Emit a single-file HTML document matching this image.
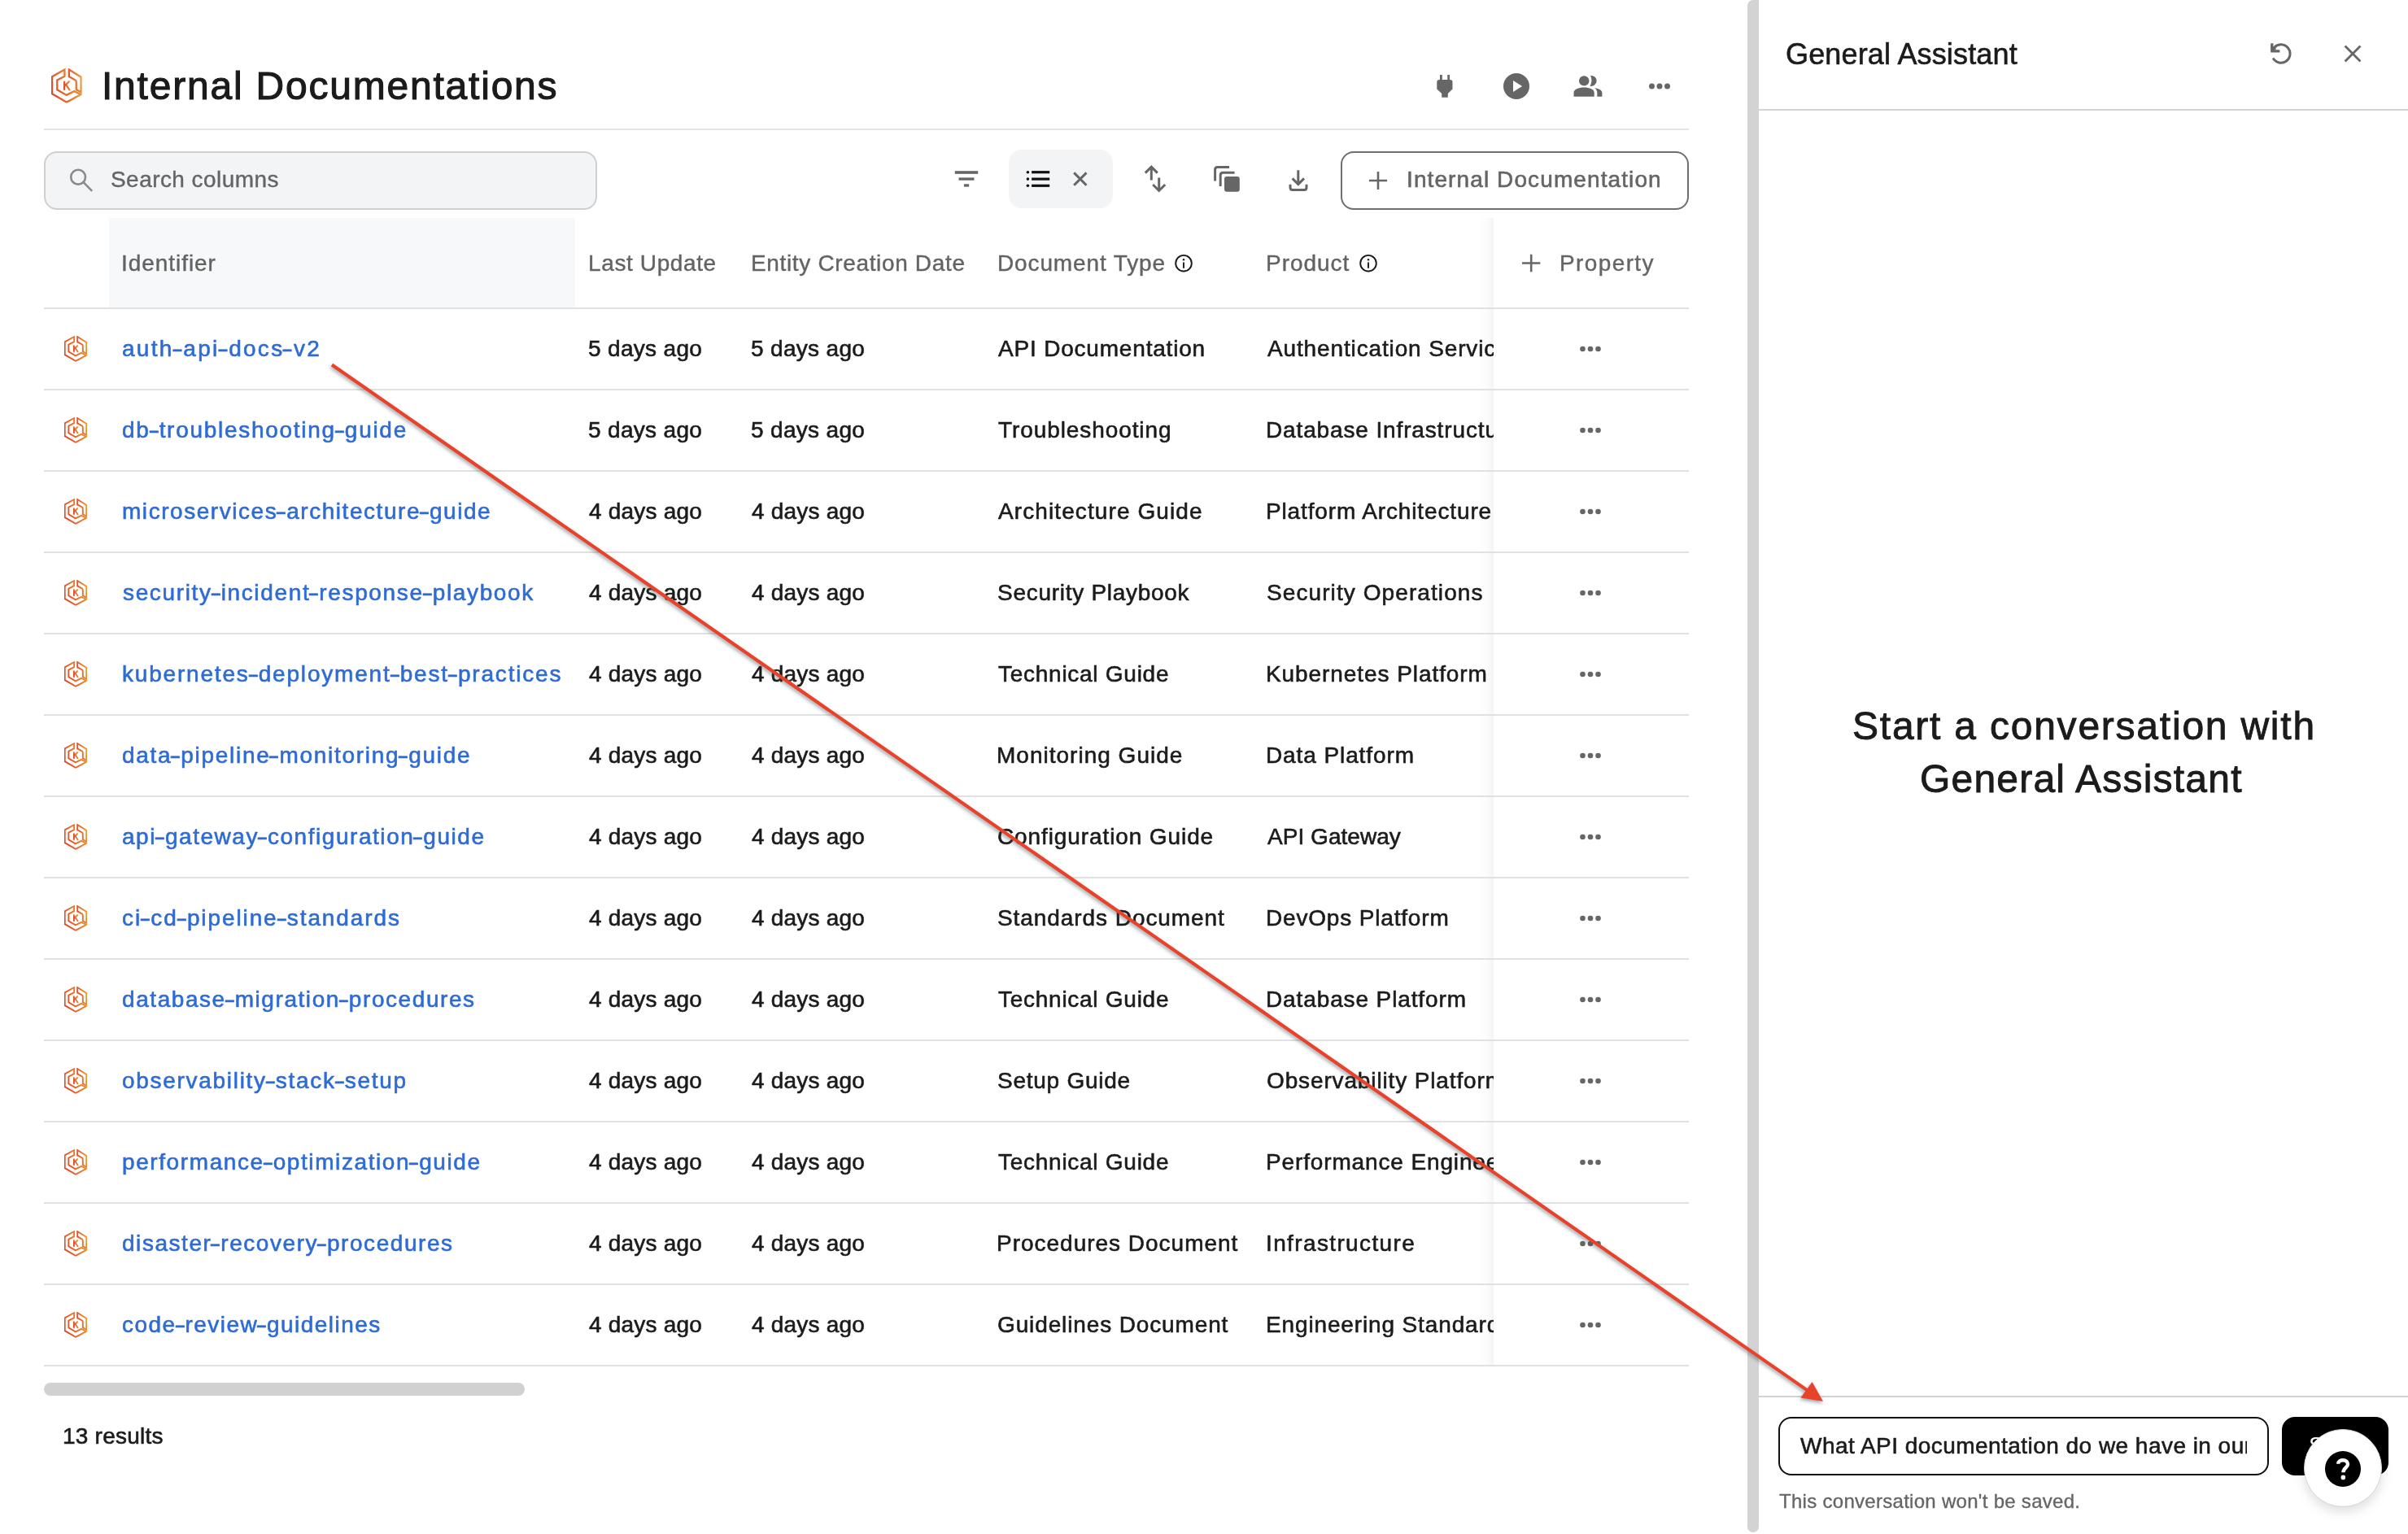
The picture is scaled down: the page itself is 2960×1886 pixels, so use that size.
<!DOCTYPE html>
<html><head><meta charset="utf-8"><title>Internal Documentations</title>
<style>
html,body{margin:0;padding:0;background:#fff;}
body{width:2960px;height:1886px;overflow:hidden;position:relative;font-family:"Liberation Sans",sans-serif;}
.a{position:absolute;box-sizing:border-box;}
.t{position:absolute;white-space:nowrap;font-family:"Liberation Sans",sans-serif;will-change:transform;}
.hy{display:inline-block;transform:scaleX(1.5);}
svg.full{position:absolute;left:0;top:0;width:2960px;height:1886px;overflow:visible;}
</style></head><body>
<!-- backgrounds -->
<div class="a" style="left:54px;top:158px;width:2022px;height:2px;background:#e3e3e3"></div>
<div class="a" style="left:54px;top:186px;width:680px;height:72px;border:2px solid #cfcfcf;border-radius:16px;background:#f3f4f6"></div>
<div class="a" style="left:1240px;top:184px;width:128px;height:72px;border-radius:16px;background:#f3f4f6"></div>
<div class="a" style="left:1648px;top:186px;width:428px;height:72px;border:2px solid #6e6e6e;border-radius:16px;background:#fff"></div>
<div class="a" style="left:134px;top:268px;width:573px;height:110px;background:#f7f8f9"></div>

<div class="t" style="left:124.7px;top:81.5px;font-size:48px;line-height:48px;color:#1b1b1b;letter-spacing:1.787px;-webkit-text-stroke:1.1px #1b1b1b">Internal Documentations</div>
<div class="t" style="left:135.9px;top:207.2px;font-size:28px;line-height:28px;color:#656565;letter-spacing:0.442px;-webkit-text-stroke:0.4px #656565">Search columns</div>
<div class="t" style="left:1729.1px;top:207.0px;font-size:28px;line-height:28px;color:#656565;letter-spacing:1.103px;-webkit-text-stroke:0.6px #656565">Internal Documentation</div>
<div class="t" style="left:149.2px;top:309.5px;font-size:28px;line-height:28px;color:#636363;letter-spacing:0.948px;-webkit-text-stroke:0.4px #636363">Identifier</div>
<div class="t" style="left:722.7px;top:309.7px;font-size:28px;line-height:28px;color:#636363;letter-spacing:0.618px;-webkit-text-stroke:0.4px #636363">Last Update</div>
<div class="t" style="left:922.7px;top:309.7px;font-size:28px;line-height:28px;color:#636363;letter-spacing:0.653px;-webkit-text-stroke:0.4px #636363">Entity Creation Date</div>
<div class="t" style="left:1225.6px;top:309.7px;font-size:28px;line-height:28px;color:#636363;letter-spacing:0.873px;-webkit-text-stroke:0.4px #636363">Document Type</div>
<div class="t" style="left:1555.8px;top:309.7px;font-size:28px;line-height:28px;color:#636363;letter-spacing:0.964px;-webkit-text-stroke:0.4px #636363">Product</div>
<div class="t" style="left:150.0px;top:414.9px;font-size:28px;line-height:28px;color:#2d6bd5;letter-spacing:2.288px;-webkit-text-stroke:0.6px #2d6bd5">auth<span class="hy">-</span>api<span class="hy">-</span>docs<span class="hy">-</span>v2</div>
<div class="t" style="left:723.3px;top:414.9px;font-size:28px;line-height:28px;color:#1b1b1b;letter-spacing:0.320px;-webkit-text-stroke:0.6px #1b1b1b">5 days ago</div>
<div class="t" style="left:923.3px;top:414.9px;font-size:28px;line-height:28px;color:#1b1b1b;letter-spacing:0.320px;-webkit-text-stroke:0.6px #1b1b1b">5 days ago</div>
<div class="t" style="left:1227.3px;top:414.9px;font-size:28px;line-height:28px;color:#1b1b1b;letter-spacing:0.808px;-webkit-text-stroke:0.6px #1b1b1b">API Documentation</div>
<div class="t" style="left:1557.6px;top:414.9px;font-size:28px;line-height:28px;color:#1b1b1b;letter-spacing:0.863px;-webkit-text-stroke:0.6px #1b1b1b">Authentication Service</div>
<div class="t" style="left:150.0px;top:514.9px;font-size:28px;line-height:28px;color:#2d6bd5;letter-spacing:1.713px;-webkit-text-stroke:0.6px #2d6bd5">db<span class="hy">-</span>troubleshooting<span class="hy">-</span>guide</div>
<div class="t" style="left:723.3px;top:514.9px;font-size:28px;line-height:28px;color:#1b1b1b;letter-spacing:0.320px;-webkit-text-stroke:0.6px #1b1b1b">5 days ago</div>
<div class="t" style="left:923.3px;top:514.9px;font-size:28px;line-height:28px;color:#1b1b1b;letter-spacing:0.320px;-webkit-text-stroke:0.6px #1b1b1b">5 days ago</div>
<div class="t" style="left:1227.3px;top:514.9px;font-size:28px;line-height:28px;color:#1b1b1b;letter-spacing:0.915px;-webkit-text-stroke:0.6px #1b1b1b">Troubleshooting</div>
<div class="t" style="left:1555.6px;top:514.9px;font-size:28px;line-height:28px;color:#1b1b1b;letter-spacing:0.863px;-webkit-text-stroke:0.6px #1b1b1b">Database Infrastructure</div>
<div class="t" style="left:150.0px;top:614.9px;font-size:28px;line-height:28px;color:#2d6bd5;letter-spacing:1.548px;-webkit-text-stroke:0.6px #2d6bd5">microservices<span class="hy">-</span>architecture<span class="hy">-</span>guide</div>
<div class="t" style="left:724.3px;top:614.9px;font-size:28px;line-height:28px;color:#1b1b1b;letter-spacing:0.209px;-webkit-text-stroke:0.6px #1b1b1b">4 days ago</div>
<div class="t" style="left:924.3px;top:614.9px;font-size:28px;line-height:28px;color:#1b1b1b;letter-spacing:0.209px;-webkit-text-stroke:0.6px #1b1b1b">4 days ago</div>
<div class="t" style="left:1227.3px;top:614.9px;font-size:28px;line-height:28px;color:#1b1b1b;letter-spacing:1.099px;-webkit-text-stroke:0.6px #1b1b1b">Architecture Guide</div>
<div class="t" style="left:1555.6px;top:614.9px;font-size:28px;line-height:28px;color:#1b1b1b;letter-spacing:0.863px;-webkit-text-stroke:0.6px #1b1b1b">Platform Architecture</div>
<div class="t" style="left:151.0px;top:714.9px;font-size:28px;line-height:28px;color:#2d6bd5;letter-spacing:1.647px;-webkit-text-stroke:0.6px #2d6bd5">security<span class="hy">-</span>incident<span class="hy">-</span>response<span class="hy">-</span>playbook</div>
<div class="t" style="left:724.3px;top:714.9px;font-size:28px;line-height:28px;color:#1b1b1b;letter-spacing:0.209px;-webkit-text-stroke:0.6px #1b1b1b">4 days ago</div>
<div class="t" style="left:924.3px;top:714.9px;font-size:28px;line-height:28px;color:#1b1b1b;letter-spacing:0.209px;-webkit-text-stroke:0.6px #1b1b1b">4 days ago</div>
<div class="t" style="left:1226.3px;top:714.9px;font-size:28px;line-height:28px;color:#1b1b1b;letter-spacing:0.718px;-webkit-text-stroke:0.6px #1b1b1b">Security Playbook</div>
<div class="t" style="left:1556.6px;top:714.9px;font-size:28px;line-height:28px;color:#1b1b1b;letter-spacing:1.090px;-webkit-text-stroke:0.6px #1b1b1b">Security Operations</div>
<div class="t" style="left:150.0px;top:814.9px;font-size:28px;line-height:28px;color:#2d6bd5;letter-spacing:1.805px;-webkit-text-stroke:0.6px #2d6bd5">kubernetes<span class="hy">-</span>deployment<span class="hy">-</span>best<span class="hy">-</span>practices</div>
<div class="t" style="left:724.3px;top:814.9px;font-size:28px;line-height:28px;color:#1b1b1b;letter-spacing:0.209px;-webkit-text-stroke:0.6px #1b1b1b">4 days ago</div>
<div class="t" style="left:924.3px;top:814.9px;font-size:28px;line-height:28px;color:#1b1b1b;letter-spacing:0.209px;-webkit-text-stroke:0.6px #1b1b1b">4 days ago</div>
<div class="t" style="left:1227.3px;top:814.9px;font-size:28px;line-height:28px;color:#1b1b1b;letter-spacing:0.732px;-webkit-text-stroke:0.6px #1b1b1b">Technical Guide</div>
<div class="t" style="left:1555.6px;top:814.9px;font-size:28px;line-height:28px;color:#1b1b1b;letter-spacing:0.927px;-webkit-text-stroke:0.6px #1b1b1b">Kubernetes Platform</div>
<div class="t" style="left:150.0px;top:914.9px;font-size:28px;line-height:28px;color:#2d6bd5;letter-spacing:1.701px;-webkit-text-stroke:0.6px #2d6bd5">data<span class="hy">-</span>pipeline<span class="hy">-</span>monitoring<span class="hy">-</span>guide</div>
<div class="t" style="left:724.3px;top:914.9px;font-size:28px;line-height:28px;color:#1b1b1b;letter-spacing:0.209px;-webkit-text-stroke:0.6px #1b1b1b">4 days ago</div>
<div class="t" style="left:924.3px;top:914.9px;font-size:28px;line-height:28px;color:#1b1b1b;letter-spacing:0.209px;-webkit-text-stroke:0.6px #1b1b1b">4 days ago</div>
<div class="t" style="left:1225.3px;top:914.9px;font-size:28px;line-height:28px;color:#1b1b1b;letter-spacing:1.010px;-webkit-text-stroke:0.6px #1b1b1b">Monitoring Guide</div>
<div class="t" style="left:1555.6px;top:914.9px;font-size:28px;line-height:28px;color:#1b1b1b;letter-spacing:0.904px;-webkit-text-stroke:0.6px #1b1b1b">Data Platform</div>
<div class="t" style="left:150.0px;top:1014.9px;font-size:28px;line-height:28px;color:#2d6bd5;letter-spacing:1.550px;-webkit-text-stroke:0.6px #2d6bd5">api<span class="hy">-</span>gateway<span class="hy">-</span>configuration<span class="hy">-</span>guide</div>
<div class="t" style="left:724.3px;top:1014.9px;font-size:28px;line-height:28px;color:#1b1b1b;letter-spacing:0.209px;-webkit-text-stroke:0.6px #1b1b1b">4 days ago</div>
<div class="t" style="left:924.3px;top:1014.9px;font-size:28px;line-height:28px;color:#1b1b1b;letter-spacing:0.209px;-webkit-text-stroke:0.6px #1b1b1b">4 days ago</div>
<div class="t" style="left:1226.3px;top:1014.9px;font-size:28px;line-height:28px;color:#1b1b1b;letter-spacing:0.896px;-webkit-text-stroke:0.6px #1b1b1b">Configuration Guide</div>
<div class="t" style="left:1557.6px;top:1014.9px;font-size:28px;line-height:28px;color:#1b1b1b;letter-spacing:0.039px;-webkit-text-stroke:0.6px #1b1b1b">API Gateway</div>
<div class="t" style="left:150.0px;top:1114.9px;font-size:28px;line-height:28px;color:#2d6bd5;letter-spacing:1.898px;-webkit-text-stroke:0.6px #2d6bd5">ci<span class="hy">-</span>cd<span class="hy">-</span>pipeline<span class="hy">-</span>standards</div>
<div class="t" style="left:724.3px;top:1114.9px;font-size:28px;line-height:28px;color:#1b1b1b;letter-spacing:0.209px;-webkit-text-stroke:0.6px #1b1b1b">4 days ago</div>
<div class="t" style="left:924.3px;top:1114.9px;font-size:28px;line-height:28px;color:#1b1b1b;letter-spacing:0.209px;-webkit-text-stroke:0.6px #1b1b1b">4 days ago</div>
<div class="t" style="left:1226.3px;top:1114.9px;font-size:28px;line-height:28px;color:#1b1b1b;letter-spacing:0.932px;-webkit-text-stroke:0.6px #1b1b1b">Standards Document</div>
<div class="t" style="left:1555.6px;top:1114.9px;font-size:28px;line-height:28px;color:#1b1b1b;letter-spacing:0.825px;-webkit-text-stroke:0.6px #1b1b1b">DevOps Platform</div>
<div class="t" style="left:150.0px;top:1214.9px;font-size:28px;line-height:28px;color:#2d6bd5;letter-spacing:1.568px;-webkit-text-stroke:0.6px #2d6bd5">database<span class="hy">-</span>migration<span class="hy">-</span>procedures</div>
<div class="t" style="left:724.3px;top:1214.9px;font-size:28px;line-height:28px;color:#1b1b1b;letter-spacing:0.209px;-webkit-text-stroke:0.6px #1b1b1b">4 days ago</div>
<div class="t" style="left:924.3px;top:1214.9px;font-size:28px;line-height:28px;color:#1b1b1b;letter-spacing:0.209px;-webkit-text-stroke:0.6px #1b1b1b">4 days ago</div>
<div class="t" style="left:1227.3px;top:1214.9px;font-size:28px;line-height:28px;color:#1b1b1b;letter-spacing:0.732px;-webkit-text-stroke:0.6px #1b1b1b">Technical Guide</div>
<div class="t" style="left:1555.6px;top:1214.9px;font-size:28px;line-height:28px;color:#1b1b1b;letter-spacing:0.883px;-webkit-text-stroke:0.6px #1b1b1b">Database Platform</div>
<div class="t" style="left:150.0px;top:1314.9px;font-size:28px;line-height:28px;color:#2d6bd5;letter-spacing:1.702px;-webkit-text-stroke:0.6px #2d6bd5">observability<span class="hy">-</span>stack<span class="hy">-</span>setup</div>
<div class="t" style="left:724.3px;top:1314.9px;font-size:28px;line-height:28px;color:#1b1b1b;letter-spacing:0.209px;-webkit-text-stroke:0.6px #1b1b1b">4 days ago</div>
<div class="t" style="left:924.3px;top:1314.9px;font-size:28px;line-height:28px;color:#1b1b1b;letter-spacing:0.209px;-webkit-text-stroke:0.6px #1b1b1b">4 days ago</div>
<div class="t" style="left:1226.3px;top:1314.9px;font-size:28px;line-height:28px;color:#1b1b1b;letter-spacing:0.750px;-webkit-text-stroke:0.6px #1b1b1b">Setup Guide</div>
<div class="t" style="left:1556.6px;top:1314.9px;font-size:28px;line-height:28px;color:#1b1b1b;letter-spacing:0.863px;-webkit-text-stroke:0.6px #1b1b1b">Observability Platform</div>
<div class="t" style="left:150.0px;top:1414.9px;font-size:28px;line-height:28px;color:#2d6bd5;letter-spacing:1.594px;-webkit-text-stroke:0.6px #2d6bd5">performance<span class="hy">-</span>optimization<span class="hy">-</span>guide</div>
<div class="t" style="left:724.3px;top:1414.9px;font-size:28px;line-height:28px;color:#1b1b1b;letter-spacing:0.209px;-webkit-text-stroke:0.6px #1b1b1b">4 days ago</div>
<div class="t" style="left:924.3px;top:1414.9px;font-size:28px;line-height:28px;color:#1b1b1b;letter-spacing:0.209px;-webkit-text-stroke:0.6px #1b1b1b">4 days ago</div>
<div class="t" style="left:1227.3px;top:1414.9px;font-size:28px;line-height:28px;color:#1b1b1b;letter-spacing:0.732px;-webkit-text-stroke:0.6px #1b1b1b">Technical Guide</div>
<div class="t" style="left:1555.6px;top:1414.9px;font-size:28px;line-height:28px;color:#1b1b1b;letter-spacing:0.863px;-webkit-text-stroke:0.6px #1b1b1b">Performance Engineering</div>
<div class="t" style="left:150.0px;top:1514.9px;font-size:28px;line-height:28px;color:#2d6bd5;letter-spacing:1.550px;-webkit-text-stroke:0.6px #2d6bd5">disaster<span class="hy">-</span>recovery<span class="hy">-</span>procedures</div>
<div class="t" style="left:724.3px;top:1514.9px;font-size:28px;line-height:28px;color:#1b1b1b;letter-spacing:0.209px;-webkit-text-stroke:0.6px #1b1b1b">4 days ago</div>
<div class="t" style="left:924.3px;top:1514.9px;font-size:28px;line-height:28px;color:#1b1b1b;letter-spacing:0.209px;-webkit-text-stroke:0.6px #1b1b1b">4 days ago</div>
<div class="t" style="left:1225.3px;top:1514.9px;font-size:28px;line-height:28px;color:#1b1b1b;letter-spacing:0.989px;-webkit-text-stroke:0.6px #1b1b1b">Procedures Document</div>
<div class="t" style="left:1555.6px;top:1514.9px;font-size:28px;line-height:28px;color:#1b1b1b;letter-spacing:1.371px;-webkit-text-stroke:0.6px #1b1b1b">Infrastructure</div>
<div class="t" style="left:150.0px;top:1614.9px;font-size:28px;line-height:28px;color:#2d6bd5;letter-spacing:1.468px;-webkit-text-stroke:0.6px #2d6bd5">code<span class="hy">-</span>review<span class="hy">-</span>guidelines</div>
<div class="t" style="left:724.3px;top:1614.9px;font-size:28px;line-height:28px;color:#1b1b1b;letter-spacing:0.209px;-webkit-text-stroke:0.6px #1b1b1b">4 days ago</div>
<div class="t" style="left:924.3px;top:1614.9px;font-size:28px;line-height:28px;color:#1b1b1b;letter-spacing:0.209px;-webkit-text-stroke:0.6px #1b1b1b">4 days ago</div>
<div class="t" style="left:1226.3px;top:1614.9px;font-size:28px;line-height:28px;color:#1b1b1b;letter-spacing:0.871px;-webkit-text-stroke:0.6px #1b1b1b">Guidelines Document</div>
<div class="t" style="left:1555.6px;top:1614.9px;font-size:28px;line-height:28px;color:#1b1b1b;letter-spacing:0.863px;-webkit-text-stroke:0.6px #1b1b1b">Engineering Standards</div>
<div class="t" style="left:76.6px;top:1751.7px;font-size:28px;line-height:28px;color:#1b1b1b;letter-spacing:0.223px;-webkit-text-stroke:0.6px #1b1b1b">13 results</div>
<div class="t" style="left:2194.7px;top:48.8px;font-size:36px;line-height:36px;color:#1b1b1b;letter-spacing:0.161px;-webkit-text-stroke:0.6px #1b1b1b">General Assistant</div>
<div class="t" style="left:2276.5px;top:869.2px;font-size:48px;line-height:48px;color:#1b1b1b;letter-spacing:1.771px;-webkit-text-stroke:0.9px #1b1b1b">Start a conversation with</div>
<div class="t" style="left:2360.3px;top:933.5px;font-size:48px;line-height:48px;color:#1b1b1b;letter-spacing:1.206px;-webkit-text-stroke:0.9px #1b1b1b">General Assistant</div>
<div class="t" style="left:2187.0px;top:1833.9px;font-size:24px;line-height:24px;color:#656565;letter-spacing:0.289px;-webkit-text-stroke:0.35px #656565">This conversation won't be saved.</div>

<!-- sticky column -->
<div class="a" style="left:1818px;top:268px;width:18px;height:1412px;background:linear-gradient(to right,rgba(0,0,0,0),rgba(0,0,0,0.012) 50%,rgba(0,0,0,0.045))"></div>
<div class="a" style="left:1836px;top:268px;width:240px;height:1412px;background:#fff"></div>
<div class="t" style="left:1916.9px;top:309.7px;font-size:28px;line-height:28px;color:#656565;letter-spacing:1.383px;-webkit-text-stroke:0.4px #656565">Property</div>

<!-- row borders -->
<div class="a" style="left:54px;top:378px;width:2022px;height:2px;background:#e1e1e1"></div>
<div class="a" style="left:54px;top:478px;width:2022px;height:2px;background:#e1e1e1"></div>
<div class="a" style="left:54px;top:578px;width:2022px;height:2px;background:#e1e1e1"></div>
<div class="a" style="left:54px;top:678px;width:2022px;height:2px;background:#e1e1e1"></div>
<div class="a" style="left:54px;top:778px;width:2022px;height:2px;background:#e1e1e1"></div>
<div class="a" style="left:54px;top:878px;width:2022px;height:2px;background:#e1e1e1"></div>
<div class="a" style="left:54px;top:978px;width:2022px;height:2px;background:#e1e1e1"></div>
<div class="a" style="left:54px;top:1078px;width:2022px;height:2px;background:#e1e1e1"></div>
<div class="a" style="left:54px;top:1178px;width:2022px;height:2px;background:#e1e1e1"></div>
<div class="a" style="left:54px;top:1278px;width:2022px;height:2px;background:#e1e1e1"></div>
<div class="a" style="left:54px;top:1378px;width:2022px;height:2px;background:#e1e1e1"></div>
<div class="a" style="left:54px;top:1478px;width:2022px;height:2px;background:#e1e1e1"></div>
<div class="a" style="left:54px;top:1578px;width:2022px;height:2px;background:#e1e1e1"></div>
<div class="a" style="left:54px;top:1678px;width:2022px;height:2px;background:#e1e1e1"></div>

<!-- scrollbars -->
<div class="a" style="left:54px;top:1700px;width:591px;height:16px;border-radius:8px;background:#d1d1d1"></div>
<div class="a" style="left:2148px;top:0px;width:14px;height:1884px;border-radius:7px 0 7px 7px;background:#d3d3d3"></div>

<!-- panel -->
<div class="a" style="left:2162px;top:134px;width:798px;height:2px;background:#d2d2d2"></div>
<div class="a" style="left:2162px;top:1716px;width:798px;height:2px;background:#d2d2d2"></div>
<div class="a" style="left:2186px;top:1742px;width:603px;height:72px;border:2px solid #111;border-radius:16px;background:#fff"></div>
<div class="a" style="left:2200px;top:1750px;width:562px;height:56px;overflow:hidden"><div class="t" style="left:13.2px;top:13.7px;font-size:28px;line-height:28px;color:#1b1b1b;letter-spacing:0.462px;-webkit-text-stroke:0.6px #1b1b1b">What API documentation do we have in our catalog?</div></div>
<div class="a" style="left:2805px;top:1742px;width:131px;height:72px;border-radius:16px;background:#000;overflow:hidden"><div class="t" style="left:33px;top:21px;font-size:28px;line-height:28px;color:#fff;letter-spacing:0.5px">Send</div></div>
<div class="a" style="left:2832px;top:1757px;width:96px;height:96px;border-radius:50%;background:#fff;border:1.5px solid #d4d4d4;box-shadow:0 6px 14px rgba(0,0,0,0.13)"></div>
<div class="a" style="left:2858px;top:1784px;width:44px;height:44px;border-radius:50%;background:#000"></div>

<svg class="full" viewBox="0 0 2960 1886">
<defs>
<linearGradient id="eg" x1="0" y1="0.7" x2="1" y2="0.3">
<stop offset="0" stop-color="#de4a2b"/><stop offset="0.55" stop-color="#e8772f"/><stop offset="1" stop-color="#ee9c34"/>
</linearGradient>
<symbol id="eks" viewBox="0 0 725 820">
<g fill="none" stroke="url(#eg)" stroke-width="44" stroke-linejoin="miter">
<path d="M316 30 L20 195 L20 600 L365 800 L700 618 L545 540 L360 632 L140 505 L140 278 L316 188 Z"/>
<path d="M420 30 L705 205 L705 565 L592 500 L592 320 Q592 290 562 272 L420 195 Z"/>
<path d="M310 300 V515 M435 300 L322 410 M350 385 L440 520" stroke-width="44"/>
</g>
</symbol>
<symbol id="eks2" viewBox="0 0 725 820">
<g fill="none" stroke="url(#eg)" stroke-width="50" stroke-linejoin="miter">
<path d="M316 30 L20 195 L20 600 L365 800 L700 618 L545 540 L360 632 L140 505 L140 278 L316 188 Z"/>
<path d="M420 30 L705 205 L705 565 L592 500 L592 320 Q592 290 562 272 L420 195 Z"/>
<path d="M310 300 V515 M435 300 L322 410 M350 385 L440 520" stroke-width="50"/>
</g>
</symbol>
<filter id="sh" x="-5%" y="-5%" width="110%" height="110%">
<feDropShadow dx="-1" dy="2.2" stdDeviation="2" flood-color="#2a4650" flood-opacity="0.5"/>
</filter>
</defs>
<use href="#eks" x="63" y="84" width="37.7" height="42.7"/>
<use href="#eks2" x="78.9" y="412.8" width="28.1" height="31.9"/>
<use href="#eks2" x="78.9" y="512.8" width="28.1" height="31.9"/>
<use href="#eks2" x="78.9" y="612.8" width="28.1" height="31.9"/>
<use href="#eks2" x="78.9" y="712.8" width="28.1" height="31.9"/>
<use href="#eks2" x="78.9" y="812.8" width="28.1" height="31.9"/>
<use href="#eks2" x="78.9" y="912.8" width="28.1" height="31.9"/>
<use href="#eks2" x="78.9" y="1012.8" width="28.1" height="31.9"/>
<use href="#eks2" x="78.9" y="1112.8" width="28.1" height="31.9"/>
<use href="#eks2" x="78.9" y="1212.8" width="28.1" height="31.9"/>
<use href="#eks2" x="78.9" y="1312.8" width="28.1" height="31.9"/>
<use href="#eks2" x="78.9" y="1412.8" width="28.1" height="31.9"/>
<use href="#eks2" x="78.9" y="1512.8" width="28.1" height="31.9"/>
<use href="#eks2" x="78.9" y="1612.8" width="28.1" height="31.9"/>
<g fill="#666">
<rect x="1770" y="92" width="2.8" height="7"/><rect x="1779.3" y="92" width="2.7" height="7"/>
<path d="M1769.3 98 h13.2 q3 0 3 3 v8.6 l-5.7 5.4 v4.8 h-7.6 v-4.8 l-5.9 -5.4 v-8.6 q0 -3 3 -3z"/>
<circle cx="1864" cy="106" r="16"/>
<circle cx="1947.2" cy="99.4" r="6.2"/>
<path d="M1955.1 93.1 A6.43 6.43 0 1 1 1954.7 105.7 A14 14 0 0 0 1955.1 93.1z"/>
<path d="M1934.5 118.7 V114 C1934.5 109.8 1940.5 107.5 1947.1 107.5 C1953.7 107.5 1959.7 109.8 1959.7 114 V118.7z"/>
<path d="M1960.2 108.2 C1965.5 108.9 1969.4 110.8 1969.4 114 V118.7 H1963.3 V113.5 C1963.3 111.5 1962 109.5 1960.2 108.2z"/>
<circle cx="2030.5" cy="105.9" r="3.5"/><circle cx="2040" cy="105.9" r="3.5"/><circle cx="2049.5" cy="105.9" r="3.5"/>
<rect x="1173.8" y="210.2" width="28.4" height="3.6"/><rect x="1178.5" y="218.4" width="19" height="3.3"/><rect x="1184.9" y="226.3" width="6.3" height="3.3"/>
<rect x="1505" y="216.9" width="18.8" height="18.8" rx="3"/>
<circle cx="1945.5" cy="429" r="3.3"/><circle cx="1955" cy="429" r="3.3"/><circle cx="1964.5" cy="429" r="3.3"/>
<circle cx="1945.5" cy="529" r="3.3"/><circle cx="1955" cy="529" r="3.3"/><circle cx="1964.5" cy="529" r="3.3"/>
<circle cx="1945.5" cy="629" r="3.3"/><circle cx="1955" cy="629" r="3.3"/><circle cx="1964.5" cy="629" r="3.3"/>
<circle cx="1945.5" cy="729" r="3.3"/><circle cx="1955" cy="729" r="3.3"/><circle cx="1964.5" cy="729" r="3.3"/>
<circle cx="1945.5" cy="829" r="3.3"/><circle cx="1955" cy="829" r="3.3"/><circle cx="1964.5" cy="829" r="3.3"/>
<circle cx="1945.5" cy="929" r="3.3"/><circle cx="1955" cy="929" r="3.3"/><circle cx="1964.5" cy="929" r="3.3"/>
<circle cx="1945.5" cy="1029" r="3.3"/><circle cx="1955" cy="1029" r="3.3"/><circle cx="1964.5" cy="1029" r="3.3"/>
<circle cx="1945.5" cy="1129" r="3.3"/><circle cx="1955" cy="1129" r="3.3"/><circle cx="1964.5" cy="1129" r="3.3"/>
<circle cx="1945.5" cy="1229" r="3.3"/><circle cx="1955" cy="1229" r="3.3"/><circle cx="1964.5" cy="1229" r="3.3"/>
<circle cx="1945.5" cy="1329" r="3.3"/><circle cx="1955" cy="1329" r="3.3"/><circle cx="1964.5" cy="1329" r="3.3"/>
<circle cx="1945.5" cy="1429" r="3.3"/><circle cx="1955" cy="1429" r="3.3"/><circle cx="1964.5" cy="1429" r="3.3"/>
<circle cx="1945.5" cy="1529" r="3.3"/><circle cx="1955" cy="1529" r="3.3"/><circle cx="1964.5" cy="1529" r="3.3"/>
<circle cx="1945.5" cy="1629" r="3.3"/><circle cx="1955" cy="1629" r="3.3"/><circle cx="1964.5" cy="1629" r="3.3"/>
</g>
<path d="M1860 98.9 L1860 113.1 L1871.1 106 z" fill="#fff"/>
<path d="M2791.3 56 L2797.2 57.8 L2797.6 61.2 L2791.3 62.5 Z" fill="#666"/>
<g fill="#111">
<circle cx="1263.4" cy="211.7" r="1.8"/><circle cx="1263.4" cy="220.1" r="1.8"/><circle cx="1263.4" cy="228.3" r="1.8"/>
<rect x="1268.1" y="210.1" width="22.1" height="3.2"/><rect x="1268.1" y="218.5" width="22.1" height="3.2"/><rect x="1268.1" y="226.7" width="22.1" height="3.2"/>
</g>
<g fill="none" stroke="#666" stroke-width="3">
<path d="M1320.2 212.4 L1335.5 227.7 M1335.5 212.4 L1320.2 227.7"/>
<path d="M1407.8 212.6 L1415.3 205.1 L1422.8 212.6 M1415.3 206 V221.5"/>
<path d="M1424.7 218.6 V233.5 M1417.2 227 L1424.7 234.5 L1432.2 227"/>
<path d="M1493.6 222.4 V208.5 q0 -3 3 -3 H1511"/>
<path d="M1500.2 229 V215.2 q0 -3 3 -3 H1517.6"/>
<path d="M1595.8 209.2 V225.5 M1588.6 219.4 L1595.8 226.6 L1603 219.4"/>
<path d="M1586 226.8 V230.4 q0 3 3 3 H1603 q3 0 3 -3 V226.8"/>
<path d="M1683 222 H1705 M1694 211.1 V232.9" stroke-width="2.6"/>
<path d="M1871 323.5 H1893.3 M1882.2 312.7 V334.2" stroke-width="2.6"/>
<path d="M2795.9 58.1 A11.2 11.2 0 1 1 2794.1 71.6"/>
<path d="M2792.8 53.3 V62.8 H2802.4" stroke-linejoin="miter" stroke-width="3.2"/>
<path d="M2882.6 56.6 L2901.5 75.5 M2901.5 56.6 L2882.6 75.5" stroke-width="2.8"/>
</g>
<g fill="none" stroke="#8a8a8a" stroke-width="2.6">
<circle cx="96.1" cy="217.7" r="8.9"/><path d="M102.6 224.2 L113.2 234.8"/>
</g>
<g fill="none" stroke="#1b1b1b" stroke-width="1.9">
<circle cx="1455" cy="323.7" r="9.8"/><path d="M1455 322.6 V329.8"/>
<circle cx="1682" cy="323.7" r="9.8"/><path d="M1682 322.6 V329.8"/>
</g>
<g fill="#1b1b1b"><circle cx="1455" cy="319.3" r="1.2"/><circle cx="1682" cy="319.3" r="1.2"/></g>
<!-- help ? -->
<path d="M2874.2 1799.8 C2874.2 1796.6 2877 1795.2 2880.2 1795.2 C2883.6 1795.2 2886 1797.5 2886 1800.3 C2886 1804.2 2880.4 1804.8 2880.4 1810.3" fill="none" stroke="#fff" stroke-width="4.4"/>
<circle cx="2880.3" cy="1816.4" r="2.8" fill="#fff"/>
<!-- red arrow -->
<g filter="url(#sh)">
<path d="M408 448.5 L2222 1709.6" stroke="#e8432a" stroke-width="4.2" fill="none"/>
<path d="M2241 1723 L2213.5 1718.4 L2227.6 1699 Z" fill="#e8432a"/>
</g>
</svg>
</body></html>
